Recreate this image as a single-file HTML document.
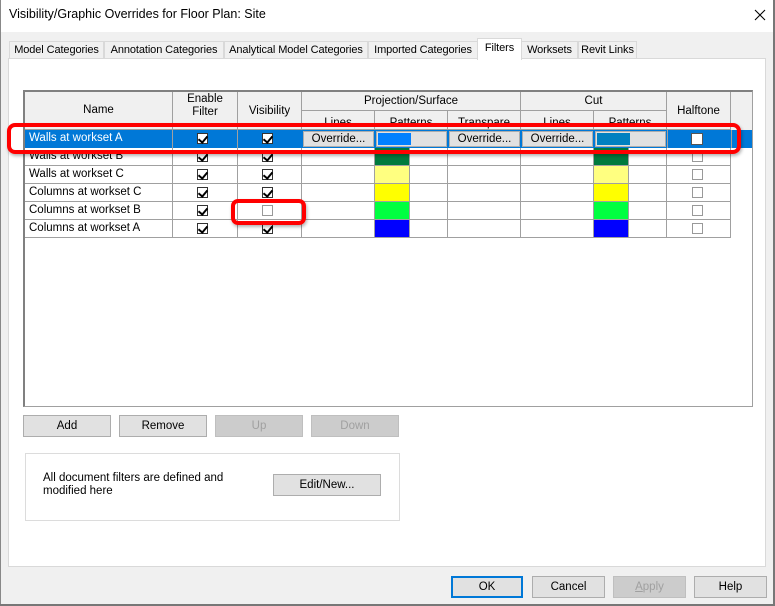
<!DOCTYPE html>
<html><head><style>
*{box-sizing:border-box;margin:0;padding:0}
body{width:775px;height:606px;overflow:hidden;background:#f0f0f0;font-family:"Liberation Sans",sans-serif;font-size:11.5px;color:#000;position:relative}
.a{position:absolute;white-space:nowrap}
.btn{position:absolute;background:#e1e1e1;border:1px solid #adadad;text-align:center;line-height:20px;font-size:11.5px;white-space:nowrap}
.dis{background:#cccccc;border-color:#bfbfbf;color:#a0a0a0}
.tab{position:absolute;top:41px;height:18px;border:1px solid #d9d9d9;border-bottom:none;background:#f0f0f0;text-align:center;line-height:17px;font-size:11px;white-space:nowrap;overflow:hidden;letter-spacing:-0.1px}
.cell{position:absolute;border-right:1px solid #a0a0a0;border-bottom:1px solid #a0a0a0;overflow:hidden;white-space:nowrap}
.hd{background:#f0f0f0;text-align:center}
.cb{position:absolute;width:11px;height:11px;border:1px solid #333;background:#fff}
.cb.u{border-color:#999}
.ck::after{content:"";position:absolute;left:2px;top:0px;width:4px;height:7px;border:solid #000;border-width:0 2px 2px 0;transform:rotate(40deg)}
</style></head><body>
<div class="a" style="left:0;top:0;width:775px;height:32px;background:#fff"></div>
<div class="a" style="left:9px;top:7px;font-size:12.5px">Visibility/Graphic Overrides for Floor Plan: Site</div>
<svg class="a" style="left:754px;top:9px" width="12" height="12"><path d="M1 1L11 11M11 1L1 11" stroke="#000" stroke-width="1.1"/></svg>
<div class="a" style="left:0;top:0;width:1px;height:606px;background:#888"></div>
<div class="a" style="left:773px;top:0;width:2px;height:606px;background:#777"></div>
<div class="a" style="left:0;top:604px;width:775px;height:2px;background:#777"></div>

<div class="tab" style="left:9px;width:95px">Model Categories</div>
<div class="tab" style="left:104px;width:120px">Annotation Categories</div>
<div class="tab" style="left:224px;width:144px">Analytical Model Categories</div>
<div class="tab" style="left:368px;width:110px">Imported Categories</div>
<div class="tab" style="left:521px;width:57px">Worksets</div>
<div class="tab" style="left:578px;width:59px">Revit Links</div>
<div class="a" style="left:8px;top:58px;width:758px;height:509px;background:#fff;border:1px solid #d9d9d9"></div>
<div class="tab" style="left:477px;top:38px;width:45px;height:22px;background:#fff;border-color:#d9d9d9;line-height:19px;z-index:2">Filters</div>

<div class="a" style="left:23px;top:90px;width:730px;height:317px;background:#fff;border:1px solid #a0a0a0;border-top:2px solid #808080;border-left:2px solid #808080"></div>
<div class="a" style="left:25px;top:92px;width:727px;height:38px;background:#f0f0f0"></div>
<div class="cell hd" style="left:25px;top:92px;width:148px;height:38px;line-height:36px">Name</div>
<div class="cell hd" style="left:173px;top:92px;width:65px;height:38px;line-height:13px;padding-top:1px">Enable<br>Filter</div>
<div class="cell hd" style="left:238px;top:92px;width:64px;height:38px;line-height:38px">Visibility</div>
<div class="cell hd" style="left:302px;top:92px;width:219px;height:19px;line-height:18px">Projection/Surface</div>
<div class="cell hd" style="left:521px;top:92px;width:146px;height:19px;line-height:18px">Cut</div>
<div class="cell hd" style="left:667px;top:92px;width:64px;height:38px;line-height:38px">Halftone</div>
<div class="cell hd" style="left:302px;top:111px;width:73px;height:19px;line-height:24px">Lines</div>
<div class="cell hd" style="left:375px;top:111px;width:73px;height:19px;line-height:24px">Patterns</div>
<div class="cell hd" style="left:448px;top:111px;width:73px;height:19px;line-height:24px">Transpare</div>
<div class="cell hd" style="left:521px;top:111px;width:73px;height:19px;line-height:24px">Lines</div>
<div class="cell hd" style="left:594px;top:111px;width:73px;height:19px;line-height:24px">Patterns</div>

<div class="a" style="left:25px;top:130px;width:727px;height:18px;background:#0078d7"></div>
<div class="a" style="left:29px;top:132px;color:#fff">Walls at workset A</div>
<div class="a" style="left:172px;top:130px;width:1px;height:18px;background:#a0a0a0"></div>
<div class="a" style="left:237px;top:130px;width:1px;height:18px;background:#a0a0a0"></div>
<div class="cb ck" style="left:197px;top:133px"></div>
<div class="cb ck" style="left:262px;top:133px"></div>
<div class="btn" style="left:303px;top:131px;width:71px;height:16px;line-height:14px">Override...</div>
<div class="btn" style="left:376px;top:131px;width:71px;height:16px"><div class="a" style="left:1px;top:1px;width:33px;height:12px;background:#0080ff"></div></div>
<div class="btn" style="left:449px;top:131px;width:71px;height:16px;line-height:14px">Override...</div>
<div class="btn" style="left:522px;top:131px;width:71px;height:16px;line-height:14px">Override...</div>
<div class="btn" style="left:595px;top:131px;width:71px;height:16px"><div class="a" style="left:1px;top:1px;width:33px;height:12px;background:#0080c0"></div></div>
<div class="a" style="left:667px;top:130px;width:1px;height:18px;background:#a0a0a0"></div>
<div class="cb" style="left:691px;top:133px;width:12px;height:12px;border-color:#555"></div>
<div class="a" style="left:731px;top:130px;width:1px;height:18px;background:#a0a0a0"></div>

<div id="rows"></div>
<script>
var rows=[["Walls at workset B","#007a3d",1],["Walls at workset C","#ffff80",1],["Columns at workset C","#ffff00",1],["Columns at workset B","#00ff40",0],["Columns at workset A","#0000ff",1]];
var h="",cols=[25,173,238,302,375,448,521,594,667,731];
rows.forEach(function(r,i){var y=148+i*18;
for(var c=0;c<9;c++){h+='<div class="cell" style="left:'+cols[c]+'px;top:'+y+'px;width:'+(cols[c+1]-cols[c])+'px;height:18px"></div>';}
h+='<div class="a" style="left:29px;top:'+(y+2)+'px">'+r[0]+'</div>';
h+='<div class="cb ck" style="left:197px;top:'+(y+3)+'px"></div>';
h+='<div class="cb '+(r[2]?'ck':'u')+'" style="left:262px;top:'+(y+3)+'px"></div>';
h+='<div class="a" style="left:375px;top:'+y+'px;width:35px;height:17px;background:'+r[1]+';border-right:1px solid #a0a0a0"></div>';
h+='<div class="a" style="left:594px;top:'+y+'px;width:35px;height:17px;background:'+r[1]+';border-right:1px solid #a0a0a0"></div>';
h+='<div class="cb u" style="left:692px;top:'+(y+3)+'px"></div>';});
document.getElementById("rows").innerHTML=h;
</script>

<div class="a" style="left:7px;top:123px;width:734px;height:31px;border:4px solid #f00;border-radius:8px;box-shadow:1px 2px 3px rgba(0,0,0,.3)"></div>
<div class="a" style="left:231px;top:199px;width:75px;height:26px;border:4px solid #f00;border-radius:7px;box-shadow:1px 2px 3px rgba(0,0,0,.3)"></div>

<div class="btn" style="left:23px;top:415px;width:88px;height:22px">Add</div>
<div class="btn" style="left:119px;top:415px;width:88px;height:22px">Remove</div>
<div class="btn dis" style="left:215px;top:415px;width:88px;height:22px">Up</div>
<div class="btn dis" style="left:311px;top:415px;width:88px;height:22px">Down</div>

<div class="a" style="left:25px;top:453px;width:375px;height:68px;border:1px solid #dcdcdc"></div>
<div class="a" style="left:43px;top:472px;line-height:13px">All document filters are defined and<br>modified here</div>
<div class="btn" style="left:273px;top:474px;width:108px;height:22px">Edit/New...</div>

<div class="btn" style="left:451px;top:576px;width:72px;height:22px;border:2px solid #0078d7;line-height:18px">OK</div>
<div class="btn" style="left:532px;top:576px;width:73px;height:22px">Cancel</div>
<div class="btn dis" style="left:613px;top:576px;width:73px;height:22px"><u>A</u>pply</div>
<div class="btn" style="left:694px;top:576px;width:73px;height:22px">Help</div>
</body></html>
